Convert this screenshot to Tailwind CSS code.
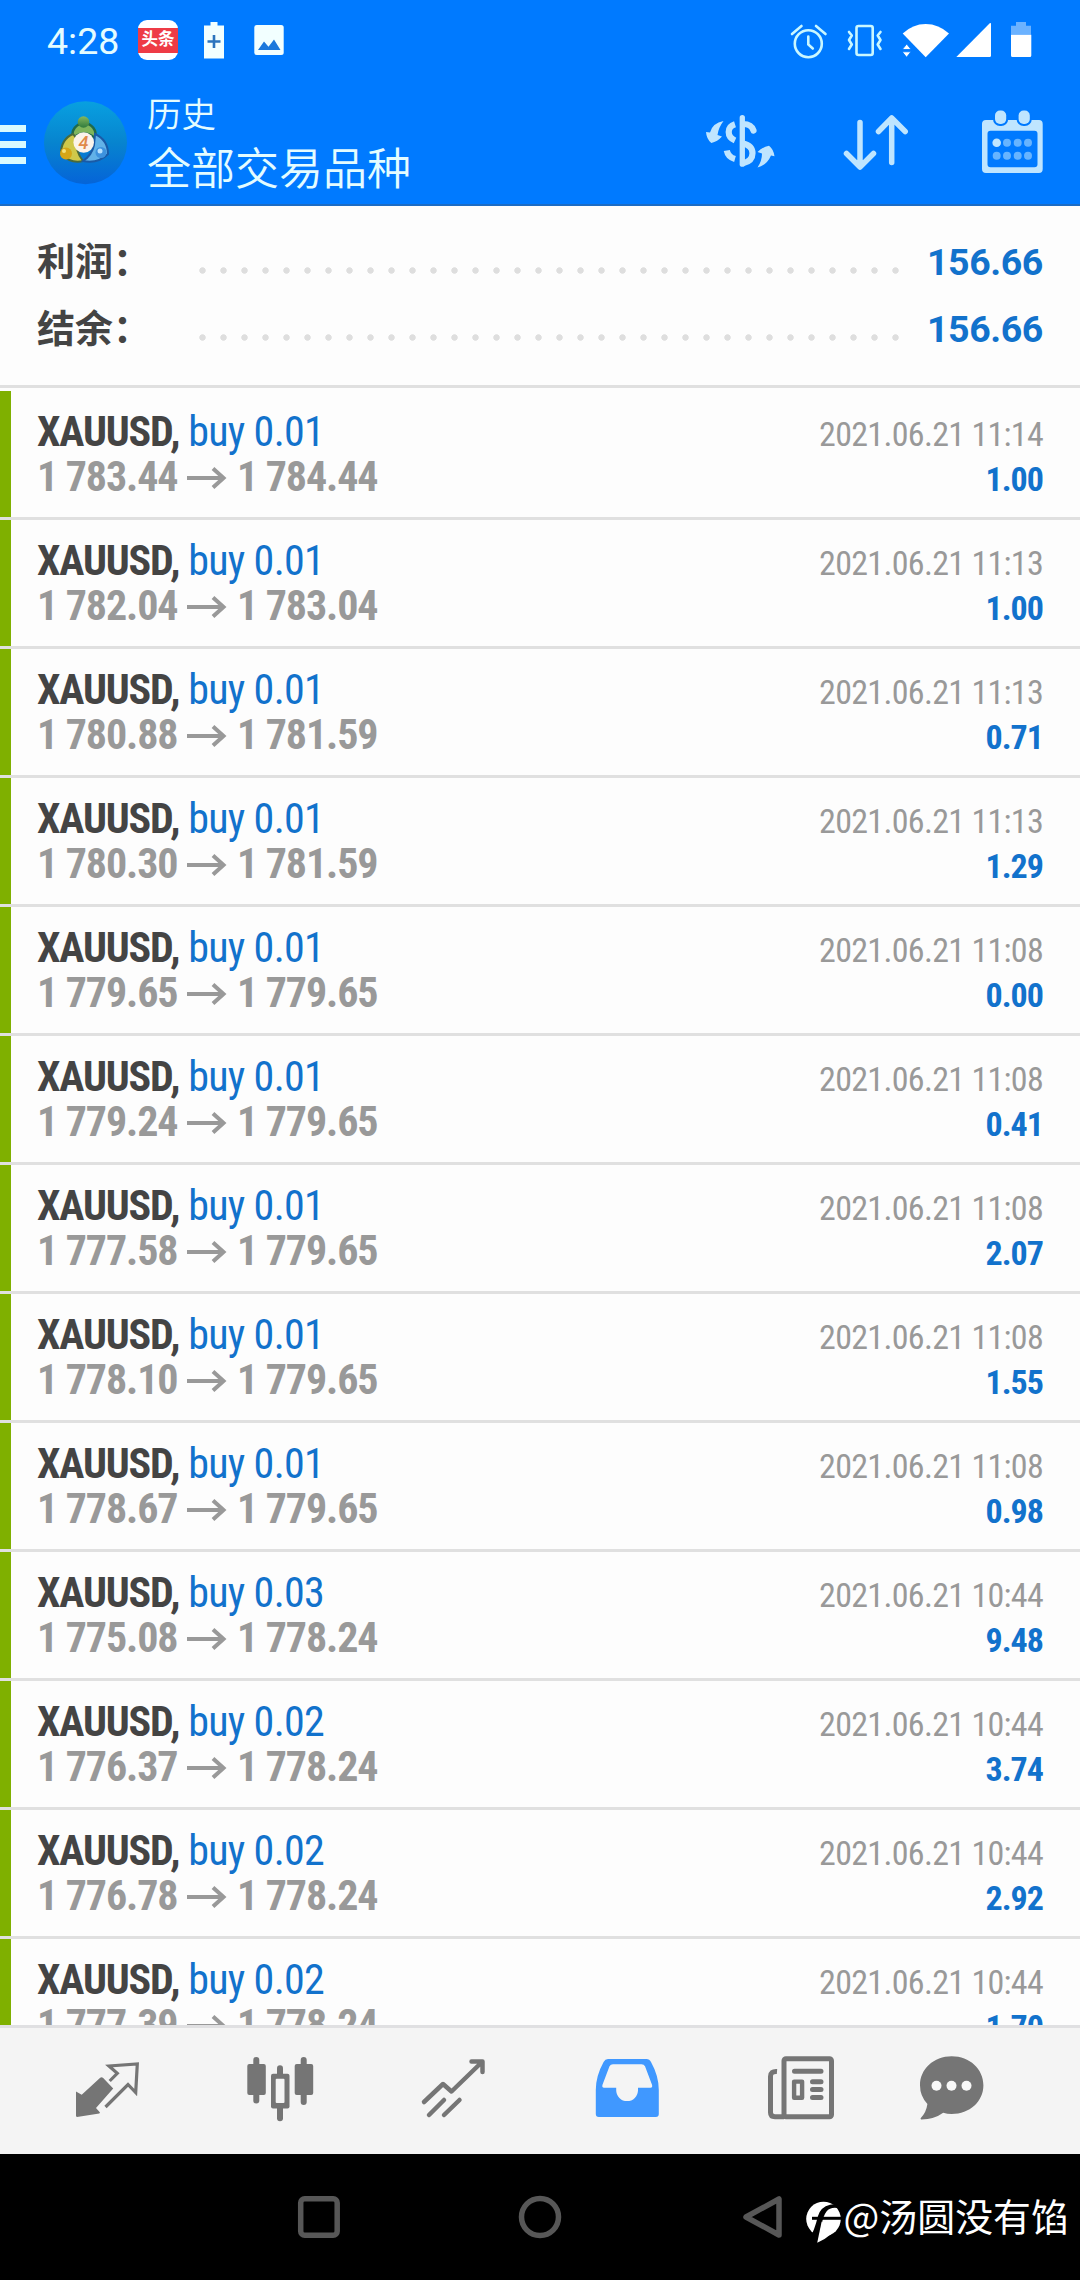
<!DOCTYPE html>
<html lang="zh-CN">
<head>
<meta charset="utf-8">
<title>历史</title>
<script src="https://cdn.jsdelivr.net/npm/@tailwindcss/browser@4"></script>
</head>
<body class="bg-black">
<div class="w-[1080px] h-[2280px] flex flex-col overflow-hidden bg-[#fdfdfd] font-['Roboto','Noto_Sans_CJK_SC',sans-serif]">

  <header class="h-[206px] shrink-0 bg-[#007aff] border-b-2 border-[#1c6cc4] text-[#e4fcff]">
    <!-- status bar -->
    <div class="h-20 flex items-center">
      <div class="w-[91px] ml-[47px] text-[37.5px] leading-[44px] pt-0.5">4:28</div>
      <div class="w-[40px] h-[40px] rounded-[9px] bg-white flex items-center">
        <div class="w-full h-[25px] bg-[#ee3b46] text-white text-[16.5px] leading-[24px] font-bold text-center">头条</div>
      </div>
      <svg class="ml-[22px]" width="90" height="40" viewBox="200 20 90 40">
        <path d="M210.500 22h7v3.500h6.500v33h-20v-33h6.500z" fill="#f2ffff"/>
        <path d="M214 35v13M207.500 41.500h13" stroke="#2b74bd" stroke-width="2.600"/>
        <rect x="254.300" y="25" width="29.400" height="30" rx="2.500" fill="#f2ffff"/>
        <path d="M258 50l6-8.500 4.500 5.200 5.500-7.200 6.500 10.500z" fill="#1c78dc"/>
      </svg>
      <svg class="ml-[500px]" width="245" height="40" viewBox="790 20 245 40" fill="none" stroke="#c9f7ff" stroke-width="2.600" stroke-linecap="round">
        <circle cx="808.300" cy="43.700" r="13.500"/>
        <path d="M808.300 36.500v8l4.500 4M792 34l9.500-8M816 26l9.500 8"/>
        <rect x="856.500" y="26" width="16.200" height="29" rx="2"/>
        <path d="M849 32l2.800 3.500-2.800 4.500 2.800 4.500-2.800 4.500M880.500 32l-2.800 3.500 2.800 4.500-2.800 4.500 2.800 4.500" stroke-linejoin="round"/>
        <g fill="#fff" stroke="none">
          <path d="M902.700 33.500q10-9.500 23-9.500t23.300 9.500l-23.300 23.800z"/>
          <path d="M902.500 49.300l4.200-5.300 4.200 5.300zM902.500 51.800h8.400l-4.200 5.300z" stroke="#007aff" stroke-width=".8"/>
          <path d="M956.300 57L990 23q1-.5 1 1v31.500q0 1.500-1.500 1.500z"/>
          <path d="M1016 22h10v3.700h5v9h-20v-9h5z" opacity=".42"/>
          <path d="M1011 34.700h20.300v20.800q0 1.500-1.500 1.500h-17.300q-1.500 0-1.500-1.500z"/>
        </g>
      </svg>
    </div>
    <!-- toolbar -->
    <div class="h-[124px] flex items-start">
      <div class="w-[26px] mt-[45px] flex flex-col gap-[9px]">
        <div class="h-[7px] bg-[#d9faff]"></div>
        <div class="h-[7px] bg-[#d9faff]"></div>
        <div class="h-[7px] bg-[#d9faff]"></div>
      </div>
      <svg class="ml-[17px] mt-[20px]" width="85" height="85" viewBox="43 100 85 85">
        <defs>
          <linearGradient id="disc" x1="0" y1="0" x2="0" y2="1"><stop offset="0" stop-color="#08a0e0"/><stop offset=".5" stop-color="#0784cf"/><stop offset="1" stop-color="#0564d8"/></linearGradient>
          <linearGradient id="g" x1="0" y1="0" x2="0" y2="1"><stop offset="0" stop-color="#86b860"/><stop offset="1" stop-color="#2f7a3c"/></linearGradient>
        </defs>
        <circle cx="85.500" cy="142.700" r="41.500" fill="url(#disc)"/>
        <path d="M73 138a11.500 11.500 0 1 1 22 0q-11-9-22 0z" fill="#7fb55c" stroke="#1f6a4a" stroke-width="2.500"/>
        <path d="M73 134q-12 5-12 20q10 10 22 7q-8-10-6-22z" fill="#cfc84a" stroke="#4a6a3a" stroke-width="2"/>
        <path d="M95 134q13 6 13 20q-10 10-25 7q9-6 11-16z" fill="#62b2e8" stroke="#1a5aa6" stroke-width="2"/>
        <circle cx="83.500" cy="122" r="5.800" fill="url(#g)"/>
        <circle cx="66" cy="153.500" r="6" fill="#d5a617"/><circle cx="64" cy="151" r="2" fill="#f4e27a"/>
        <circle cx="101" cy="152.500" r="5.500" fill="#3d92de"/><circle cx="100" cy="151" r="2.500" fill="#b9e2ff"/>
        <circle cx="83.700" cy="142.500" r="10.300" fill="#fbf3ea"/>
        <text x="83.500" y="149" text-anchor="middle" font-size="18" font-style="italic" font-weight="500" fill="#e08a48" font-family="Roboto">4</text>
      </svg>
      <div class="ml-[19px] w-[500px]">
        <div class="mt-[12px] text-[34.500px] leading-[46px] font-[350]">历史</div>
        <div class="mt-[2px] text-[44px] leading-[60px] font-[350]">全部交易品种</div>
      </div>
      <svg class="ml-[53px] mt-[25px]" width="350" height="75" viewBox="700 105 350 75" fill="none" stroke="#bfe5ff" stroke-linecap="round" stroke-linejoin="round">
        <!-- currency exchange -->
        <path d="M742.300 117.700v46.500" stroke-width="5.300"/>
        <path d="M743 124q8.500 0 10.500 6.500" stroke-width="6.200"/>
        <path d="M735 124.300q-6.300 2-6.300 7.700t6.300 8.500M743 143.500q9.500 2 9.500 9.800t-9.500 10M726.800 150.500q1.200 6.500 8.200 8.500" stroke-width="6.200" stroke-linecap="butt"/>
        <path d="M723.500 121q-11 2-13.500 11.500l-4-.5q.5 7 5.300 11 6.200-1.500 10.700-6.500l-4.500-1.500q1-7.500 6-14zM757.500 167.500q9.500-2.500 13.500-12l3.500.800q-1-7.300-5.500-10.600-6.500 1.300-11.500 6.300l4.500 1.500q0 7.500-4.500 14z" fill="#bfe5ff" stroke="none"/>
        <!-- sort -->
        <path d="M860 122.500v44M846.500 153.500l13.500 13.500 13.500-13.500M891.700 162.500v-44M878.500 131.500l13.200-13.500 13.500 13.500" stroke-width="5.500"/>
        <!-- calendar -->
        <g stroke="none" fill="#bfe5ff">
          <path fill-rule="evenodd" d="M986 120h53q3.700 0 3.700 4v45q0 4-3.700 4h-53q-4 0-4-4v-45q0-4 4-4zM990.500 130.700q-3 0-3 3v30.600q0 3 3 3h44q3 0 3-3v-30.600q0-3-3-3z"/>
          <rect x="995" y="110.500" width="11.200" height="13.500" rx="5" stroke="#007aff" stroke-width="4" paint-order="stroke"/>
          <rect x="1018.600" y="110.500" width="11.200" height="13.500" rx="5" stroke="#007aff" stroke-width="4" paint-order="stroke"/>
          <circle cx="996.700" cy="142.700" r="4.300"/>
          <g fill="#67b4ff">
            <circle cx="1007" cy="142.700" r="4"/><circle cx="1017.700" cy="142.700" r="4"/><circle cx="1028" cy="142.700" r="4"/>
            <circle cx="996.700" cy="155.700" r="4"/><circle cx="1007" cy="155.700" r="4"/><circle cx="1017.700" cy="155.700" r="4"/><circle cx="1028" cy="155.700" r="4"/>
          </g>
        </g>
      </svg>
    </div>
  </header>

  <!-- summary -->
  <section class="h-[182px] shrink-0 pt-[23px] border-b-3 border-[#e0e0e0]">
    <div class="h-[67px] flex items-center pl-[37px] pr-[37px]">
      <div class="w-[155px] text-[38px] leading-[67px] font-bold text-[#444]">利润：</div>
      <div class="w-[714px] h-[21px] mt-[15px] bg-[radial-gradient(circle,#dedede_2.800px,transparent_3.600px)] bg-[length:21px_21px]"></div>
      <div class="flex-1 text-right text-[37.500px] leading-[67px] tracking-[-0.4px] font-bold text-[#1272cc]">156.66</div>
    </div>
    <div class="h-[67px] flex items-center pl-[37px] pr-[37px]">
      <div class="w-[155px] text-[38px] leading-[67px] font-bold text-[#444]">结余：</div>
      <div class="w-[714px] h-[21px] mt-[15px] bg-[radial-gradient(circle,#dedede_2.800px,transparent_3.600px)] bg-[length:21px_21px]"></div>
      <div class="flex-1 text-right text-[37.500px] leading-[67px] tracking-[-0.4px] font-bold text-[#1272cc]">156.66</div>
    </div>
  </section>

  <!-- deals -->
  <main id="deals" class="h-[1637px] shrink-0 pt-[3px] overflow-hidden font-stretch-condensed"></main>

  <!-- tabs -->
  <nav class="h-[129px] shrink-0 bg-[#f4f4f4] border-t-3 border-[#e0e0e2] flex pl-5 pt-[24px] text-[#757575]">
    <div class="w-[173.500px] flex justify-center"><svg width="75" height="75" viewBox="69 2052 75 75">
      <path fill="currentColor" d="M76 2091.500l5.700 3.300 18.500-17q1.500-1 3 .300l10 10.400-17.200 19.500 4 4.500-.7 1L77 2117l-1-.700z"/>
      <path fill="none" stroke="currentColor" stroke-width="3.200" d="M109.700 2081l7.600-7.700-8.300-7.300 28.300-2-1.600 28.500-7.700-8-22.500 22.500"/></svg></div>
    <div class="w-[173.500px] flex justify-center"><svg width="75" height="75" viewBox="243 2052 75 75" fill="currentColor">
      <rect x="253.300" y="2057" width="6" height="46.500" rx="3"/><rect x="247.300" y="2064" width="18.500" height="31" rx="2"/>
      <rect x="277" y="2065.300" width="6" height="56" rx="3"/><rect x="271" y="2073.700" width="18.500" height="34.700" rx="2"/>
      <rect x="275.700" y="2078.700" width="8.800" height="24.300" rx="1" fill="#f4f4f4"/>
      <rect x="300.700" y="2057" width="6" height="48" rx="3"/><rect x="294.700" y="2064" width="18.500" height="31" rx="2"/></svg></div>
    <div class="w-[173.500px] flex justify-center"><svg width="75" height="75" viewBox="416 2052 75 75" fill="none" stroke="currentColor" stroke-width="4.500" stroke-linecap="round" stroke-linejoin="round">
      <path d="M424 2102l19-18 8.500 7.500 30.500-29.500M471.500 2061.500h11v10.500M429 2115l15-15M444 2115l15.500-15"/></svg></div>
    <div class="w-[173.500px] flex justify-center"><svg width="75" height="75" viewBox="590 2052 75 75">
      <path fill="#4098ff" fill-rule="evenodd" d="M608 2059h38.500q3 0 4.500 3 7.800 14 7.800 28v24q0 3-3 3h-57q-3 0-3-3v-24q0-14 7.800-28 1.500-3 4.400-3zM613 2064.300q-2.500 0-3.500 2l-7 18.500q-.8 2.900 1.500 2.900h12.200v2.500a10.900 10.900 0 0 0 21.800 0v-2.500h12.500q2.300 0 1.500-2.900l-7-18.500q-1-2-3.500-2z"/></svg></div>
    <div class="w-[173.500px] flex justify-center"><svg width="75" height="75" viewBox="763.500 2052 75 75" fill="none" stroke="currentColor" stroke-width="5" stroke-linecap="round" stroke-linejoin="round">
      <rect x="784.500" y="2058.700" width="47.500" height="58" rx="2"/>
      <path d="M777.500 2071.500q-6.500-.5-6.500 5v36q0 4.200 4.500 4.200h9" stroke-linecap="butt"/>
      <path d="M795 2071.300h26.500M813 2081.700h8.500M813 2089.500h8.500M813 2097.500h8.500"/>
      <rect x="794.600" y="2081.600" width="8" height="16.200" stroke-width="4.400"/></svg></div>
    <div class="w-[127px] flex justify-center"><svg width="75" height="75" viewBox="913.500 2052 75 75">
      <path fill="currentColor" d="M951.200 2056.300c18 0 31.700 12.800 31.700 29s-13.700 28.700-31.700 28.700q-4.500 0-8.500-1.200-9 6.700-22 6.600-1.500-.4 0-2 5-5 6.200-13.400-7.400-7.800-7.400-18.700c0-16.200 13.700-29 31.700-29z"/>
      <g fill="#f8f8f8"><circle cx="936" cy="2085.700" r="5"/><circle cx="951" cy="2085.700" r="5"/><circle cx="966" cy="2085.700" r="5"/></g></svg></div>
  </nav>

  <!-- system navigation -->
  <footer class="flex-1 bg-black flex items-start pt-[33px]">
    <svg class="ml-[290px] mt-[3px]" width="553.500" height="60" viewBox="290 2190 553.500 60" fill="none" stroke="#575757" stroke-width="5.500" stroke-linejoin="round">
      <rect x="300.700" y="2198.700" width="36.500" height="36.500" rx="4"/>
      <circle cx="540" cy="2217" r="18.500"/>
      <path d="M779 2199v36L746 2217z"/>
      <ellipse cx="823.500" cy="2219" rx="17.300" ry="17.300" fill="#fff" stroke="none"/>
      <path d="M810 2238q4.500-8 8-22 2.500-9 12-11.300 6-1.200 9.500 1.600l-2.500 1.700q-7-.8-10.500 3.500-3 4-4.700 12l-3 15z" fill="#000" stroke="none"/>
      <path d="M812 2218.300h29" stroke="#000" stroke-width="3"/>
      <path d="M821.700 2221.500l-4.500 21.300q7.500-3 14.300-9z" fill="#fff" stroke="none"/>
    </svg>
    <div class="text-white text-[37.900px] leading-[56px] font-['Noto_Sans_CJK_SC',sans-serif] whitespace-nowrap">@汤圆没有馅</div>
  </footer>
</div>

<script>
const deals = [
  ['0.01','1 783.44','1 784.44','11:14','1.00'],
  ['0.01','1 782.04','1 783.04','11:13','1.00'],
  ['0.01','1 780.88','1 781.59','11:13','0.71'],
  ['0.01','1 780.30','1 781.59','11:13','1.29'],
  ['0.01','1 779.65','1 779.65','11:08','0.00'],
  ['0.01','1 779.24','1 779.65','11:08','0.41'],
  ['0.01','1 777.58','1 779.65','11:08','2.07'],
  ['0.01','1 778.10','1 779.65','11:08','1.55'],
  ['0.01','1 778.67','1 779.65','11:08','0.98'],
  ['0.03','1 775.08','1 778.24','10:44','9.48'],
  ['0.02','1 776.37','1 778.24','10:44','3.74'],
  ['0.02','1 776.78','1 778.24','10:44','2.92'],
  ['0.02','1 777.39','1 778.24','10:44','1.70'],
];
document.getElementById('deals').innerHTML = deals.map(([vol, open, close, time, profit]) => `
  <div class="h-[129px] flex border-b-3 border-[#e0e0e0] whitespace-nowrap">
    <div class="w-[11px] bg-[#7fb000]"></div>
    <div class="flex-1 pl-[26px] pt-[18px] text-[42px] leading-[45px]">
      <div class="text-[#1272cc] tracking-[-0.7px]"><b class="text-[#444] font-bold tracking-[-1.150px]">XAUUSD,</b> buy ${vol}</div>
      <div class="flex font-bold text-[#999] tracking-[-1.100px]">
        <span class="w-[150px]">${open}</span>
        <svg class="mt-[13px]" width="40" height="22" viewBox="0 0 40 22" fill="none" stroke="#999" stroke-width="4"><path d="M0 11h36M26 1.500l10.500 9.500L26 20.500"/></svg>
        <span class="ml-[10px]">${close}</span>
      </div>
    </div>
    <div class="pr-[37px] pt-[21px] text-right text-[34px] leading-[45px]">
      <div class="text-[#999] tracking-[-0.7px]">2021.06.21 ${time}</div>
      <div class="font-bold text-[#1272cc] tracking-[-1px]">${profit}</div>
    </div>
  </div>`).join('');
</script>
</body>
</html>
